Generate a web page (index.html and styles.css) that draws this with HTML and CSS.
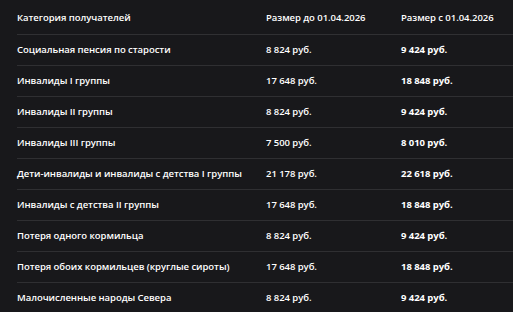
FILE: index.html
```html
<!DOCTYPE html>
<html lang="ru">
<head>
<meta charset="utf-8">
<link rel="stylesheet" href="styles.css">
</head>
<body>
<div class="wrap">
<table class="pension">
  <thead>
    <tr><th class="c1">Категория получателей</th><th class="c2">Размер до 01.04.2026</th><th class="c3">Размер с 01.04.2026</th></tr>
  </thead>
  <tbody>
    <tr><td>Социальная пенсия по старости</td><td>8 824 руб.</td><td class="new">9 424 руб.</td></tr>
    <tr><td>Инвалиды I группы</td><td>17 648 руб.</td><td class="new">18 848 руб.</td></tr>
    <tr><td>Инвалиды II группы</td><td>8 824 руб.</td><td class="new">9 424 руб.</td></tr>
    <tr><td>Инвалиды III группы</td><td>7 500 руб.</td><td class="new">8 010 руб.</td></tr>
    <tr><td>Дети-инвалиды и инвалиды с детства I группы</td><td>21 178 руб.</td><td class="new">22 618 руб.</td></tr>
    <tr><td>Инвалиды с детства II группы</td><td>17 648 руб.</td><td class="new">18 848 руб.</td></tr>
    <tr><td>Потеря одного кормильца</td><td>8 824 руб.</td><td class="new">9 424 руб.</td></tr>
    <tr><td>Потеря обоих кормильцев (круглые сироты)</td><td>17 648 руб.</td><td class="new">18 848 руб.</td></tr>
    <tr><td>Малочисленные народы Севера</td><td>8 824 руб.</td><td class="new">9 424 руб.</td></tr>
  </tbody>
</table>
</div>
</body>
</html>
```
FILE: styles.css
```css
html, body {
  margin: 0;
  padding: 0;
  background: #18181b;
  height: 100%;
  overflow: hidden;
}
.wrap {
  padding-left: 17px;
}
.pension {
  border-collapse: collapse;
  width: 496px;
  table-layout: fixed;
  font-family: "Open Sans", "Noto Sans", sans-serif;
  font-size: 9.5px;
  letter-spacing: -0.05px;
  font-weight: 600;
  line-height: 14px;
  color: #ffffff;
}
.pension th, .pension td {
  text-align: left;
  padding: 8px 0;
  border-bottom: 1px solid #2f2f32;
  white-space: nowrap;
  font-weight: 600;
}
.pension th {
  padding: 11px 0 9px;
  border-bottom: 1px solid #303033;
}
.c1 { width: 249px; }
.c2 { width: 135px; }
.pension tbody td.new {
  font-weight: 700;
}
```
